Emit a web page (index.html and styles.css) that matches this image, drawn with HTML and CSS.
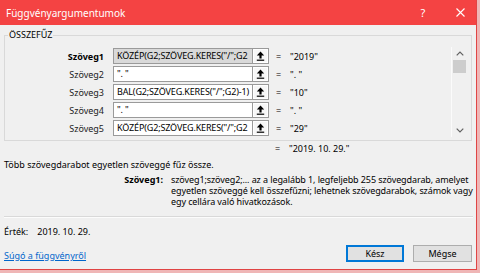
FILE: index.html
```html
<!DOCTYPE html>
<html lang="hu">
<head>
<meta charset="utf-8">
<title>Függvényargumentumok</title>
<link rel="stylesheet" href="styles.css">
</head>
<body>
<div class="dialog">
  <div class="titlebar">
    <span class="title">Függvényargumentumok</span>
    <span class="tb-help">?</span>
    <span class="tb-close"><svg width="9" height="9" viewBox="0 0 9 9"><path d="M0.5 0.5 L8.5 8.5 M8.5 0.5 L0.5 8.5" stroke="#fff" stroke-width="1.1" fill="none"/></svg></span>
  </div>
  <div class="content">
    <fieldset class="group">
      <legend>ÖSSZEFŰZ</legend>
      <div class="group-inner">
        <div class="rows">
          <div class="row">
            <span class="lbl strong">Szöveg1</span>
            <span class="field active"><span class="sel">KÖZÉP(G2;SZÖVEG.KERES("/";G2</span></span>
            <span class="ref"><svg width="9" height="10" viewBox="0 0 9 10"><path d="M4.5 0.5 L8.2 4.6 H5.6 V7.5 H3.4 V4.6 H0.8 Z" fill="#000"/><rect x="0.8" y="8.6" width="7.4" height="1.2" fill="#000"/></svg></span>
            <span class="eq">=</span><span class="val">"2019"</span>
          </div>
          <div class="row">
            <span class="lbl">Szöveg2</span>
            <span class="field">". "</span>
            <span class="ref"><svg width="9" height="10" viewBox="0 0 9 10"><path d="M4.5 0.5 L8.2 4.6 H5.6 V7.5 H3.4 V4.6 H0.8 Z" fill="#000"/><rect x="0.8" y="8.6" width="7.4" height="1.2" fill="#000"/></svg></span>
            <span class="eq">=</span><span class="val">". "</span>
          </div>
          <div class="row">
            <span class="lbl">Szöveg3</span>
            <span class="field">BAL(G2;SZÖVEG.KERES("/";G2)-1)</span>
            <span class="ref"><svg width="9" height="10" viewBox="0 0 9 10"><path d="M4.5 0.5 L8.2 4.6 H5.6 V7.5 H3.4 V4.6 H0.8 Z" fill="#000"/><rect x="0.8" y="8.6" width="7.4" height="1.2" fill="#000"/></svg></span>
            <span class="eq">=</span><span class="val">"10"</span>
          </div>
          <div class="row">
            <span class="lbl">Szöveg4</span>
            <span class="field">". "</span>
            <span class="ref"><svg width="9" height="10" viewBox="0 0 9 10"><path d="M4.5 0.5 L8.2 4.6 H5.6 V7.5 H3.4 V4.6 H0.8 Z" fill="#000"/><rect x="0.8" y="8.6" width="7.4" height="1.2" fill="#000"/></svg></span>
            <span class="eq">=</span><span class="val">". "</span>
          </div>
          <div class="row">
            <span class="lbl">Szöveg5</span>
            <span class="field">KÖZÉP(G2;SZÖVEG.KERES("/";G2</span>
            <span class="ref"><svg width="9" height="10" viewBox="0 0 9 10"><path d="M4.5 0.5 L8.2 4.6 H5.6 V7.5 H3.4 V4.6 H0.8 Z" fill="#000"/><rect x="0.8" y="8.6" width="7.4" height="1.2" fill="#000"/></svg></span>
            <span class="eq">=</span><span class="val">"29"</span>
          </div>
        </div>
        <div class="scrollbar">
          <span class="sb-arrow"><svg width="8" height="5" viewBox="0 0 8 5"><path d="M0.7 4.3 L4 1 L7.3 4.3" stroke="#606060" stroke-width="1.2" fill="none"/></svg></span>
          <span class="sb-thumb"></span>
          <span class="sb-track"></span>
          <span class="sb-arrow"><svg width="8" height="5" viewBox="0 0 8 5"><path d="M0.7 0.7 L4 4 L7.3 0.7" stroke="#606060" stroke-width="1.2" fill="none"/></svg></span>
        </div>
      </div>
    </fieldset>
    <div class="result"><span class="eq">=</span><span class="val">"2019. 10. 29."</span></div>
    <p class="desc">Több szövegdarabot egyetlen szöveggé fűz össze.</p>
    <div class="argdesc">
      <span class="arg-name">Szöveg1:</span>
      <span class="arg-text">szöveg1;szöveg2;... az a legalább 1, legfeljebb 255 szövegdarab, amelyet<br>egyetlen szöveggé kell összefűzni; lehetnek szövegdarabok, számok vagy<br>egy cellára való hivatkozások.</span>
    </div>
    <div class="sep"></div>
    <div class="value-line"><span>Érték:</span><span class="value-num">2019. 10. 29.</span></div>
    <div class="footer">
      <a class="help-link" href="#">Súgó a függvényről</a>
      <div class="buttons">
        <button class="btn primary" type="button">Kész</button>
        <button class="btn" type="button">Mégse</button>
      </div>
    </div>
  </div>
</div>
</body>
</html>
```

FILE: styles.css
```css
html, body {
  margin: 0;
  padding: 0;
}

body {
  background: #efb6b6;
  font-family: "Noto Sans", "Open Sans", sans-serif;
  font-size: 9px;
  line-height: 11px;
  color: #000;
  width: 480px;
  height: 273px;
  overflow: hidden;
}

.dialog {
  width: 476px;
  height: 269px;
  background: #f0f0f0;
  border-right: 1px solid #e04444;
  border-bottom: 1px solid #e04444;
  display: flex;
  flex-direction: column;
}

.titlebar {
  height: 25px;
  flex: none;
  background: #f44343;
  color: #fff;
  display: flex;
  align-items: center;
  padding-left: 6px;
}

.title {
  flex: 1;
  font-size: 10px;
  line-height: 14px;
}

.tb-help {
  width: 14px;
  text-align: center;
  font-size: 11px;
  line-height: 14px;
  margin-right: 14px;
}

.tb-close {
  width: 32px;
  height: 25px;
  display: flex;
  align-items: center;
  justify-content: center;
}

.content {
  flex: 1;
  padding: 0 4px;
  display: flex;
  flex-direction: column;
}

.group {
  margin: 4px 0 0 0;
  padding: 0;
  border: 1px solid #d9d9d9;
  min-width: 0;
}

.group legend {
  margin-left: 3px;
  padding: 0 1px;
  line-height: 12px;
}

.group-inner {
  display: flex;
  padding: 6px 4px 3px 0;
}

.rows {
  flex: 1;
  display: flex;
  flex-direction: column;
  gap: 2px;
  margin-top: 1px;
}

.row {
  display: flex;
  align-items: center;
  height: 16px;
}

.lbl {
  width: 99px;
  text-align: right;
  margin-right: 9px;
  color: #222;
}

.lbl.strong {
  font-weight: bold;
  color: #000;
}

.field {
  width: 139px;
  height: 16px;
  box-sizing: border-box;
  border: 1px solid #9a9a9a;
  border-right: none;
  background: #fff;
  padding: 0 2px 0 3px;
  white-space: nowrap;
  overflow: hidden;
  line-height: 14px;
  letter-spacing: -0.15px;
}

.field.active {
  background: #d9d9d9;
}

.field .sel {
  background: #d9d9d9;
}

.ref {
  width: 17px;
  height: 16px;
  box-sizing: border-box;
  border: 1px solid #9a9a9a;
  box-shadow: inset 0 0 0 1px #fff;
  background: #f7f7f7;
  display: flex;
  align-items: center;
  justify-content: center;
}

.eq {
  margin-left: 7px;
  width: 6px;
}

.val {
  margin-left: 8px;
  white-space: nowrap;
}

.scrollbar {
  width: 15px;
  height: 90px;
  border-left: 1px solid #fbfbfb;
  display: flex;
  flex-direction: column;
}

.sb-arrow {
  height: 13px;
  display: flex;
  align-items: center;
  justify-content: center;
}

.sb-thumb {
  height: 13px;
  margin: 0 1px;
  background: #cdcdcd;
}

.sb-track {
  flex: 1;
}

.result {
  display: flex;
  margin: 2px 0 0 264px;
}

.desc {
  margin: 5px 0 0 0;
}

.argdesc {
  display: flex;
  margin-top: 4px;
  line-height: 11px;
}

.arg-name {
  width: 159px;
  text-align: right;
  font-weight: bold;
  margin-right: 8px;
  flex: none;
}

.arg-text {
  white-space: nowrap;
  letter-spacing: -0.1px;
}

.sep {
  height: 0;
  margin: 9px 0 0 0;
  border-top: 1px solid #d9d9d9;
  border-bottom: 1px solid #fcfcfc;
  width: 469px;
}

.value-line {
  display: flex;
  margin-top: 8px;
}

.value-num {
  margin-left: 9px;
}

.footer {
  display: flex;
  align-items: flex-end;
  justify-content: space-between;
  margin-top: 8px;
}

.help-link {
  color: #0066cc;
  text-decoration: underline;
  margin-bottom: 1px;
}

.buttons {
  display: flex;
  gap: 9px;
}

.btn {
  font-family: inherit;
  font-size: 9px;
  height: 17px;
  padding: 0;
  background: #e1e1e1;
  border: 1px solid #adadad;
  color: #000;
  width: 59px;
}

.btn.primary {
  width: 58px;
  border-color: #0078d7;
  box-shadow: inset 0 0 0 1px #0078d7;
}
```
